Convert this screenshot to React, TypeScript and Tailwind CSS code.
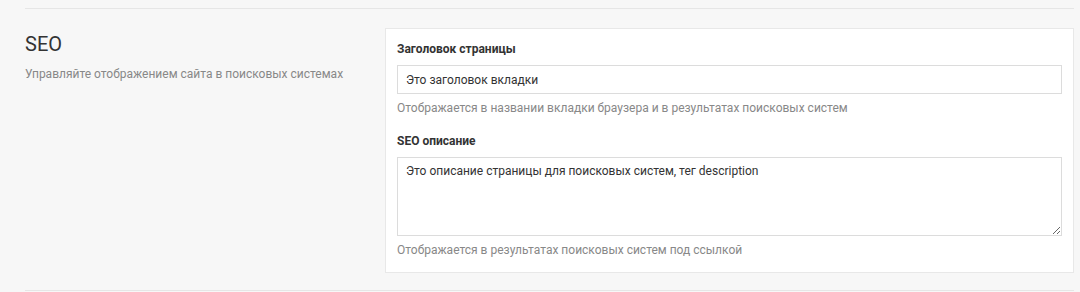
import React from 'react'

export default function App() {
  return (
    <div className="w-[1080px] h-[292px] bg-[#f7f7f7] font-['Roboto',sans-serif] text-[#333] overflow-hidden">
      <div className="ml-[25px] mr-[6px] pt-[8px]">
        <div className="border-t border-[#e6e6e6]" />
        <div className="flex pt-[19px] pb-[17px]">
          <div className="w-[360px] pt-[4px]">
            <h2 className="text-[20px] leading-[24px] text-[#333]">SEO</h2>
            <p className="mt-[10px] text-[12px] leading-[16px] text-[#888]">
              Управляйте отображением сайта в поисковых системах
            </p>
          </div>
          <div className="flex-1 bg-white border border-[#e8e8e8] px-[11px] pt-[12px] pb-[14px]">
            <label className="block text-[12px] font-bold leading-[16px] text-[#333]">Заголовок страницы</label>
            <input
              defaultValue="Это заголовок вкладки"
              className="mt-[8px] block w-full h-[29px] px-[8px] border border-[#dcdcdc] text-[12px] text-[#333] outline-none"
            />
            <p className="mt-[6px] text-[12px] leading-[16px] text-[#888]">
              Отображается в названии вкладки браузера и в результатах поисковых систем
            </p>
            <label className="mt-[17px] block text-[12px] font-bold leading-[16px] text-[#333]">SEO описание</label>
            <textarea
              defaultValue="Это описание страницы для поисковых систем, тег description"
              className="mt-[8px] block w-full h-[79px] px-[8px] py-[5px] border border-[#dcdcdc] text-[12px] leading-[16px] text-[#333] outline-none resize-y"
            />
            <p className="mt-[6px] text-[12px] leading-[16px] text-[#888]">
              Отображается в результатах поисковых систем под ссылкой
            </p>
          </div>
        </div>
        <div className="border-t border-[#e6e6e6]" />
      </div>
    </div>
  )
}
